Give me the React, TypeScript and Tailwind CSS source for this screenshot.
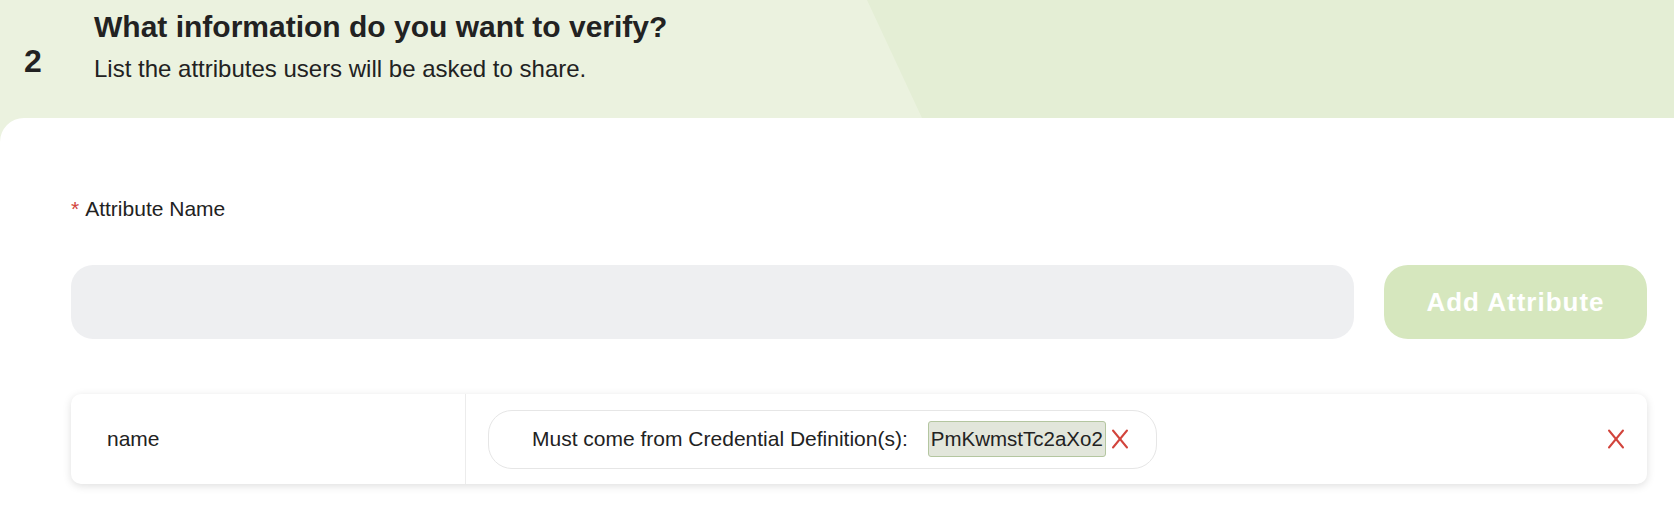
import React from "react";

const RedX = ({ className = "" }: { className?: string }) => (
  <svg
    width="18"
    height="20"
    viewBox="0 0 18 20"
    className={className}
    fill="none"
    stroke="#d2443c"
    strokeWidth="2"
    strokeLinecap="round"
  >
    <path d="M2 1.5 L16 18.5" />
    <path d="M16 1.5 L2 18.5" />
  </svg>
);

const App = () => {
  return (
    <div className="min-h-[518px] w-[1674px] bg-[#ebf2df] font-['Liberation_Sans',Arial,sans-serif] text-[#222]">
      <div className="relative h-[118px] overflow-hidden">
        <div className="absolute inset-0 bg-[#e4eed5] [clip-path:polygon(867px_0,100%_0,100%_100%,922px_100%)]" />
        <div className="relative flex pl-6 pt-[9px]">
          <div className="w-[70px] pt-[34px] text-[32px] font-bold leading-[36px]">2</div>
          <div>
            <h1 className="text-[30px] font-bold leading-[36px]">What information do you want to verify?</h1>
            <p className="mt-[8px] text-[24px] leading-[32px]">List the attributes users will be asked to share.</p>
          </div>
        </div>
      </div>

      <div className="rounded-tl-[24px] bg-white pl-[71px] pr-[27px] pt-[77px] pb-[34px]">
        <label className="block text-[21px] leading-[28px]">
          <span className="mr-[6px] text-[#d2443c]">*</span>
          Attribute Name
        </label>

        <div className="mt-[42px] flex gap-[30px]">
          <input
            type="text"
            className="h-[74px] flex-1 rounded-[22px] bg-[#eeeff1] px-6 text-[20px] outline-none"
          />
          <button
            type="button"
            className="h-[74px] w-[263px] rounded-[24px] bg-[#d6e7be] text-[26px] font-bold tracking-[1px] text-white"
          >
            Add Attribute
          </button>
        </div>

        <div className="mt-[55px] flex h-[90px] items-center rounded-[10px] bg-white shadow-[0_2px_8px_rgba(0,0,0,0.13)]">
          <div className="flex h-full w-[395px] items-center border-r border-[#ececec] pl-[36px] text-[21px] leading-[28px]">
            name
          </div>
          <div className="flex flex-1 items-center pl-[22px] pr-[22px]">
            <div className="flex h-[59px] items-center rounded-[24px] border border-[#e6e6e6] pl-[43px] pr-[27px] text-[21px] leading-[28px]">
              <span>Must come from Credential Definition(s):</span>
              <span className="ml-[20px] flex h-[36px] items-center rounded-[3px] border border-[#b4c6a0] bg-[#e2e6db] px-[2px] text-[20.5px]">
                PmKwmstTc2aXo2
              </span>
              <RedX className="ml-[5px]" />
            </div>
            <RedX className="ml-auto" />
          </div>
        </div>
      </div>
    </div>
  );
};

export default App;
